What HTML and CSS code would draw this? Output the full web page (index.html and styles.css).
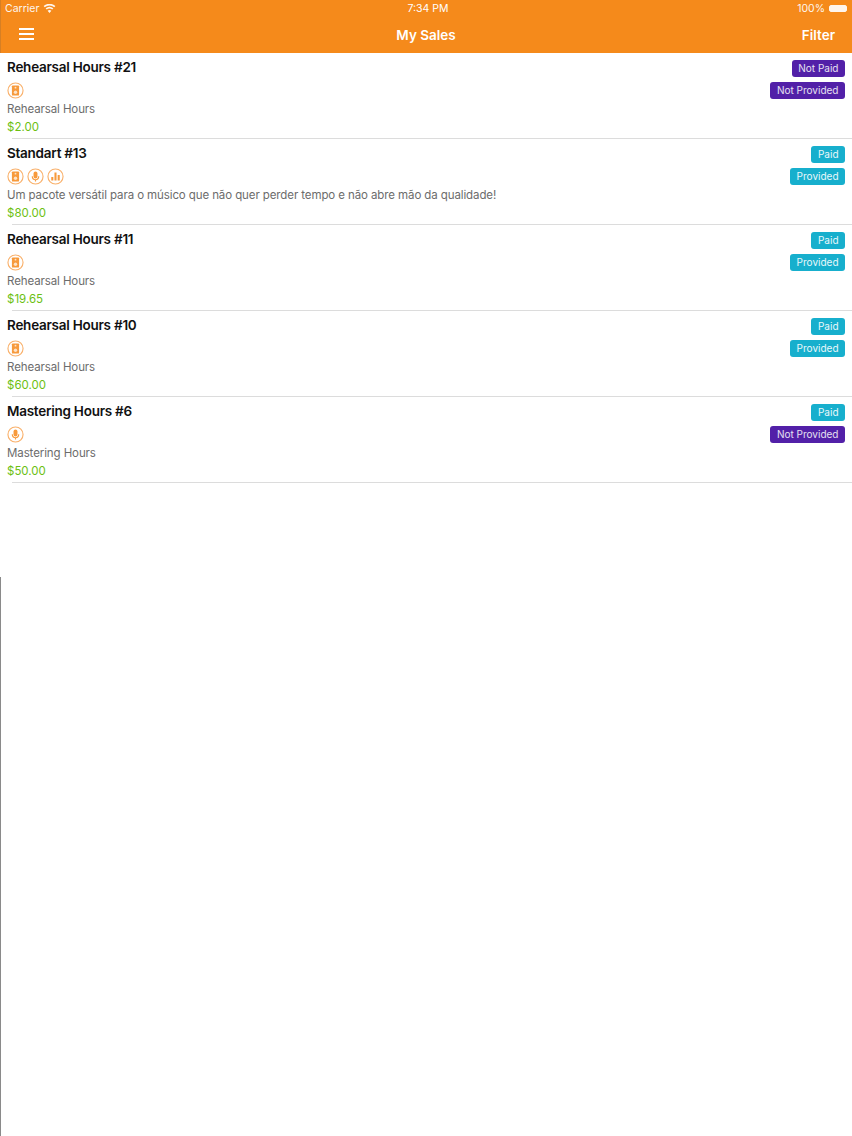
FILE: index.html
```html
<!DOCTYPE html>
<html lang="en">
<head>
    <meta charset="UTF-8">
    <title>My Sales</title>
    <link rel="stylesheet" href="styles.css">
</head>
<body>
    <svg class="sprites" width="0" height="0">
        <symbol id="ic-speaker" viewBox="0 0 18 18">
            <circle class="ic-ring" cx="9" cy="9" r="8"/>
            <rect x="5.2" y="3.6" width="7.6" height="10.8" rx="1" fill="currentColor"/>
            <circle cx="9" cy="6" r="1" fill="#fde3c8"/>
            <circle cx="9" cy="10.8" r="1.8" fill="#fde3c8"/>
        </symbol>
        <symbol id="ic-mic" viewBox="0 0 18 18">
            <circle class="ic-ring" cx="9" cy="9" r="8"/>
            <rect x="6.9" y="3.6" width="4.2" height="7.4" rx="2.1" fill="currentColor"/>
            <path d="M5.6 8.8c0 2.2 1.4 3.6 3.4 3.6s3.4-1.4 3.4-3.6M9 12.4v2" fill="none" stroke="currentColor" stroke-width="1.2"/>
        </symbol>
        <symbol id="ic-bars" viewBox="0 0 18 18">
            <circle class="ic-ring" cx="9" cy="9" r="8"/>
            <path d="M5.6 13.2V9.4M9 13.2V4.8M12.4 13.2V7.4" fill="none" stroke="currentColor" stroke-width="2.2"/>
        </symbol>
    </svg>

    <div class="statusbar">
        <div class="status-left">
            <span>Carrier</span>
            <svg class="wifi" width="13" height="9" viewBox="0 0 13 9">
                <path d="M6.5 9 4.6 6.7a3 3 0 0 1 3.8 0zM3.7 5.6 2.6 4.3a6 6 0 0 1 7.8 0L9.3 5.6a4.3 4.3 0 0 0-5.6 0zM1.7 3.3.6 2a9 9 0 0 1 11.8 0l-1.1 1.3a7.4 7.4 0 0 0-9.6 0z" fill="#fff"/>
            </svg>
        </div>
        <div class="status-time">7:34 PM</div>
        <div class="status-right">
            <span>100%</span>
            <span class="battery"><span class="battery-fill"></span></span>
        </div>
    </div>

    <header class="navbar">
        <div class="burger"><span></span><span></span><span></span></div>
        <div class="nav-title">My Sales</div>
        <div class="nav-action">Filter</div>
    </header>

    <main class="sales">
        <div class="sale">
            <div class="sale-info">
                <div class="sale-title">Rehearsal Hours #21</div>
                <div class="sale-icons">
                    <svg class="ic"><use href="#ic-speaker"/></svg>
                </div>
                <div class="sale-desc">Rehearsal Hours</div>
                <div class="sale-price">$2.00</div>
            </div>
            <div class="sale-tags">
                <span class="tag tag-no">Not Paid</span>
                <span class="tag tag-no">Not Provided</span>
            </div>
        </div>

        <div class="sale">
            <div class="sale-info">
                <div class="sale-title">Standart #13</div>
                <div class="sale-icons">
                    <svg class="ic"><use href="#ic-speaker"/></svg>
                    <svg class="ic"><use href="#ic-mic"/></svg>
                    <svg class="ic"><use href="#ic-bars"/></svg>
                </div>
                <div class="sale-desc">Um pacote versátil para o músico que não quer perder tempo e não abre mão da qualidade!</div>
                <div class="sale-price">$80.00</div>
            </div>
            <div class="sale-tags">
                <span class="tag tag-yes">Paid</span>
                <span class="tag tag-yes">Provided</span>
            </div>
        </div>

        <div class="sale">
            <div class="sale-info">
                <div class="sale-title">Rehearsal Hours #11</div>
                <div class="sale-icons">
                    <svg class="ic"><use href="#ic-speaker"/></svg>
                </div>
                <div class="sale-desc">Rehearsal Hours</div>
                <div class="sale-price">$19.65</div>
            </div>
            <div class="sale-tags">
                <span class="tag tag-yes">Paid</span>
                <span class="tag tag-yes">Provided</span>
            </div>
        </div>

        <div class="sale">
            <div class="sale-info">
                <div class="sale-title">Rehearsal Hours #10</div>
                <div class="sale-icons">
                    <svg class="ic"><use href="#ic-speaker"/></svg>
                </div>
                <div class="sale-desc">Rehearsal Hours</div>
                <div class="sale-price">$60.00</div>
            </div>
            <div class="sale-tags">
                <span class="tag tag-yes">Paid</span>
                <span class="tag tag-yes">Provided</span>
            </div>
        </div>

        <div class="sale">
            <div class="sale-info">
                <div class="sale-title">Mastering Hours #6</div>
                <div class="sale-icons">
                    <svg class="ic"><use href="#ic-mic"/></svg>
                </div>
                <div class="sale-desc">Mastering Hours</div>
                <div class="sale-price">$50.00</div>
            </div>
            <div class="sale-tags">
                <span class="tag tag-yes">Paid</span>
                <span class="tag tag-no">Not Provided</span>
            </div>
        </div>
    </main>

    <div class="edge-line"></div>
</body>
</html>
```

FILE: styles.css
```css
html, body {
    margin: 0;
    height: 1136px;
    overflow: hidden;
    background: #fff;
    font-family: Inter, "Liberation Sans", sans-serif;
}
.sprites {
    display: block;
    height: 0;
}
.statusbar {
    height: 16px;
    padding: 0 5px;
    display: flex;
    align-items: center;
    justify-content: space-between;
    background: #f58a1b;
    box-shadow: inset 1px 0 #d67f24;
    color: #fff;
    font-size: 10.5px;
    position: relative;
}
.status-left, .status-right {
    display: flex;
    align-items: center;
    gap: 4px;
    opacity: 0.92;
}
.status-time {
    position: absolute;
    left: 4px;
    right: 0;
    top: 2px;
    text-align: center;
}
.battery {
    width: 18px;
    height: 7px;
    border: 1px solid #fff;
    border-radius: 2px;
    box-sizing: border-box;
    display: block;
}
.battery-fill {
    display: block;
    height: 100%;
    background: #fff;
}
.navbar {
    height: 37px;
    padding: 0 17px 0 19px;
    display: flex;
    align-items: center;
    justify-content: space-between;
    background: #f58a1b;
    box-shadow: inset 1px 0 #d67f24;
    color: #fff;
    position: relative;
}
.burger {
    width: 15px;
    display: flex;
    flex-direction: column;
    gap: 3px;
    margin-top: -1px;
}
.burger span {
    height: 2px;
    background: #fff;
}
.nav-title {
    position: absolute;
    left: 0;
    right: 0;
    text-align: center;
    font-size: 13.5px;
    font-weight: 600;
}
.nav-action {
    font-size: 13.5px;
    font-weight: 600;
}
.sale {
    height: 85px;
    padding: 0 7px;
    display: flex;
    justify-content: space-between;
    position: relative;
    border-bottom: 1px solid transparent;
}
.sale::after {
    content: "";
    position: absolute;
    left: 12px;
    right: 0;
    bottom: -1px;
    height: 1px;
    background: #dcdcdc;
}
.sale-info {
    padding-top: 5px;
}
.sale-title {
    font-size: 13.5px;
    font-weight: 600;
    letter-spacing: -0.25px;
    line-height: 18px;
    color: #111;
}
.sale-icons {
    display: flex;
    gap: 3px;
    height: 17px;
    margin: 6px 0 2px;
}
.ic {
    width: 17px;
    height: 17px;
    color: #f79a3c;
}
.ic-ring {
    fill: none;
    stroke: #f9b06a;
    stroke-width: 1.2;
}
.sale-desc {
    font-size: 11.5px;
    letter-spacing: -0.1px;
    line-height: 17px;
    color: #6c6c6c;
}
.sale-price {
    font-size: 11.5px;
    line-height: 18px;
    color: #6cbf12;
}
.sale-tags {
    padding-top: 7px;
    display: flex;
    flex-direction: column;
    align-items: flex-end;
    gap: 5px;
}
.tag {
    height: 17px;
    padding: 0 6.5px;
    border-radius: 3px;
    font-size: 10px;
    line-height: 17px;
    color: #e6e0f2;
}
.tag-no {
    background: #5220a8;
}
.tag-yes {
    background: #17afcd;
    color: #eaf8fb;
}
.edge-line {
    position: absolute;
    left: 0;
    top: 577px;
    height: 559px;
    width: 1px;
    background: #8a8a8a;
}
```
